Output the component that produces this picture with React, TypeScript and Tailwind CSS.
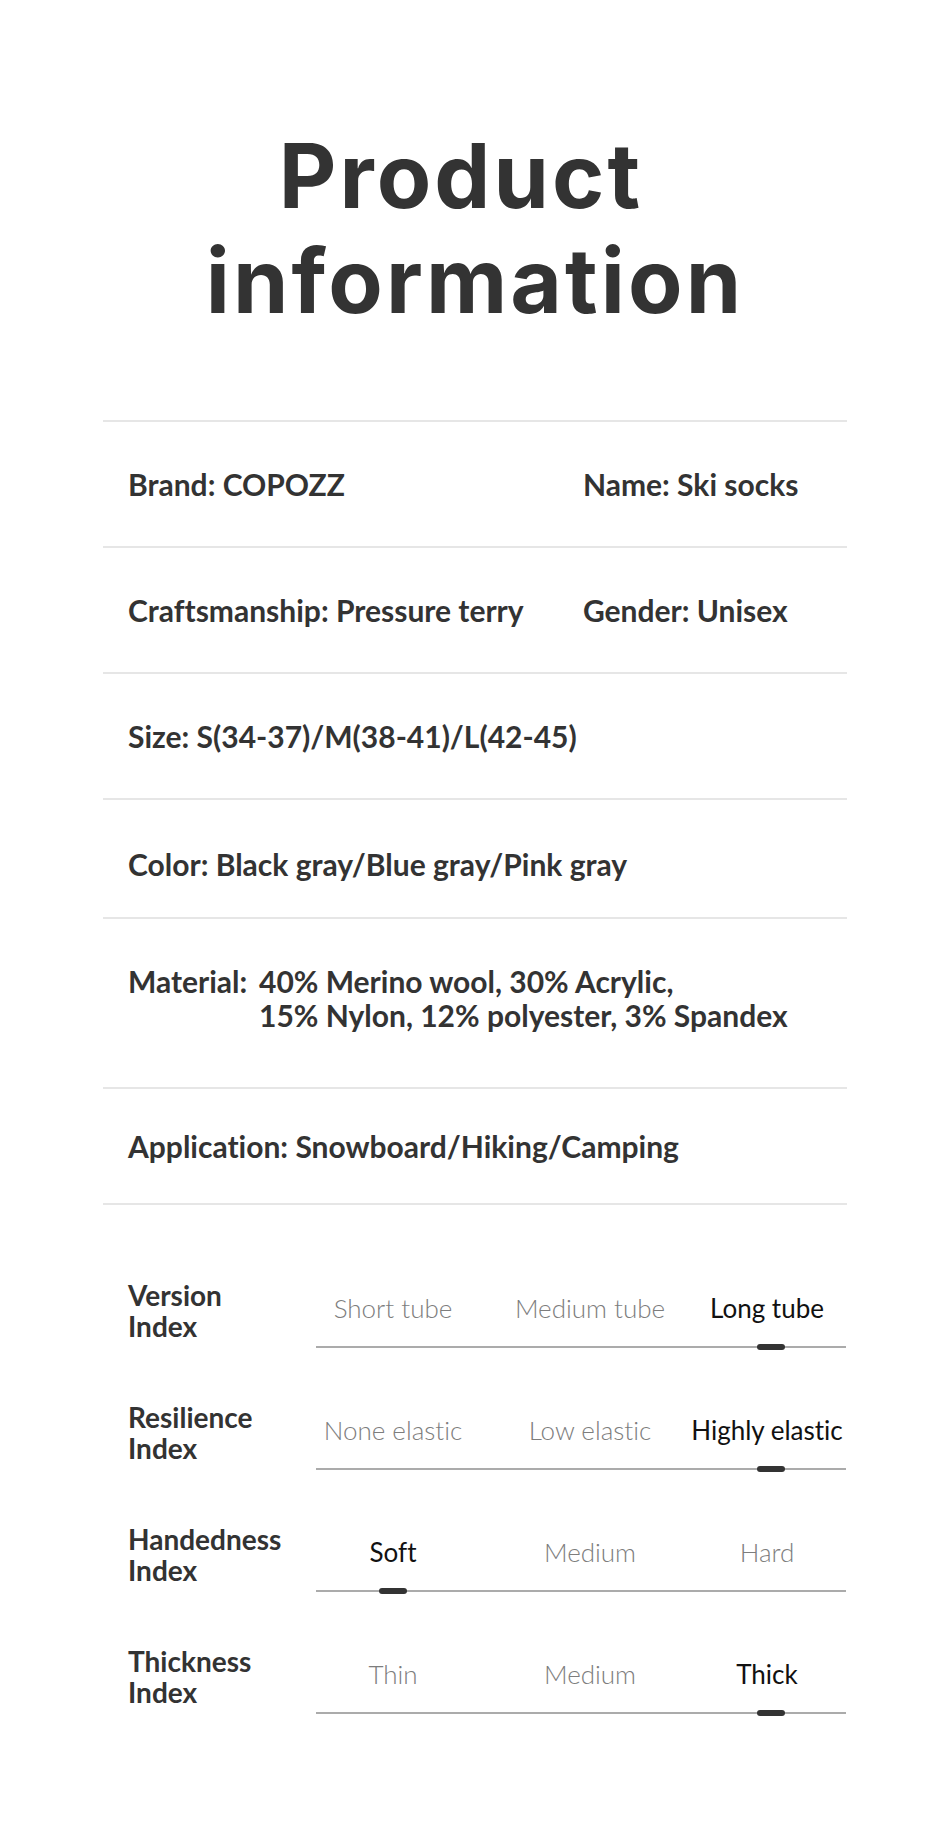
const info = [
  { h: "h-[126px]", left: "Brand: COPOZZ", right: "Name: Ski socks" },
  { h: "h-[126px]", left: "Craftsmanship: Pressure terry", right: "Gender: Unisex" },
  { h: "h-[126px]", left: "Size: S(34-37)/M(38-41)/L(42-45)" },
  { h: "h-[119px] pt-[11px]", left: "Color: Black gray/Blue gray/Pink gray" },
];

const indexes = [
  { label: "Version", options: ["Short tube", "Medium tube", "Long tube"], pick: 2 },
  { label: "Resilience", options: ["None elastic", "Low elastic", "Highly elastic"], pick: 2 },
  { label: "Handedness", options: ["Soft", "Medium", "Hard"], pick: 0 },
  { label: "Thickness", options: ["Thin", "Medium", "Thick"], pick: 2 },
];

// marker offsets under each column centre, minus half the marker
const markerPos = ["left-[63px]", "left-[260px]", "left-[441px]"];

function IndexRow({ label, options, pick }: { label: string; options: string[]; pick: number }) {
  return (
    <div className="flex h-[68px]">
      <div className="w-[213px] pl-[25px] text-[28px] font-bold leading-[31px] text-[#333]">
        <div>{label}</div>
        <div>Index</div>
      </div>
      <div className="w-[530px] pt-[12px]">
        <div className="grid h-[32px] grid-cols-[154px_240px_114px] text-[26px] leading-[32px]">
          {options.map((o, i) => (
            <div
              key={o + i}
              className={
                "flex justify-center whitespace-nowrap " +
                (i === pick ? "font-normal text-[#111]" : "font-light text-[#7d7d7d]")
              }
            >
              {o}
            </div>
          ))}
        </div>
        <div className="relative mt-[22px] h-[2px] bg-[#ababab]">
          <div className={"absolute -top-[2px] h-[6px] w-[28px] rounded-full bg-[#333] " + markerPos[pick]} />
        </div>
      </div>
    </div>
  );
}

export default function App() {
  return (
    <div className="w-[950px] bg-white pb-[104px] [font-family:Lato,sans-serif] [font-variant-ligatures:none]">
      <h1 className="pt-[123px] text-center text-[89px] font-bold leading-[105px] tracking-[0.035em] text-[#333] [font-family:Inter,sans-serif]">
        <span className="block pr-[28px]">Product</span>
        <span className="block">information</span>
      </h1>

      <div className="mx-[103px] mt-[87px] border-t-2 border-[#e6e6e6] text-[30px] font-bold leading-[36px] text-[#333]">
        {info.map((row) => (
          <div key={row.left} className={"flex items-center border-b-2 border-[#e6e6e6] pl-[25px] " + row.h}>
            <span className={row.right ? "w-[455px]" : "whitespace-nowrap"}>{row.left}</span>
            {row.right && <span>{row.right}</span>}
          </div>
        ))}

        <div className="flex h-[170px] items-center border-b-2 border-[#e6e6e6] pb-[10px] pl-[25px] leading-[34px]">
          <div className="flex items-start">
            <span className="w-[131px]">Material:</span>
            <div>
              <div>40% Merino wool, 30% Acrylic,</div>
              <div>15% Nylon, 12% polyester, 3% Spandex</div>
            </div>
          </div>
        </div>

        <div className="flex h-[116px] items-center border-b-2 border-[#e6e6e6] pl-[25px]">
          Application: Snowboard/Hiking/Camping
        </div>
      </div>

      <div className="mx-[103px] mt-[75px] flex flex-col gap-[54px]">
        {indexes.map((r) => (
          <IndexRow key={r.label} {...r} />
        ))}
      </div>
    </div>
  );
}
